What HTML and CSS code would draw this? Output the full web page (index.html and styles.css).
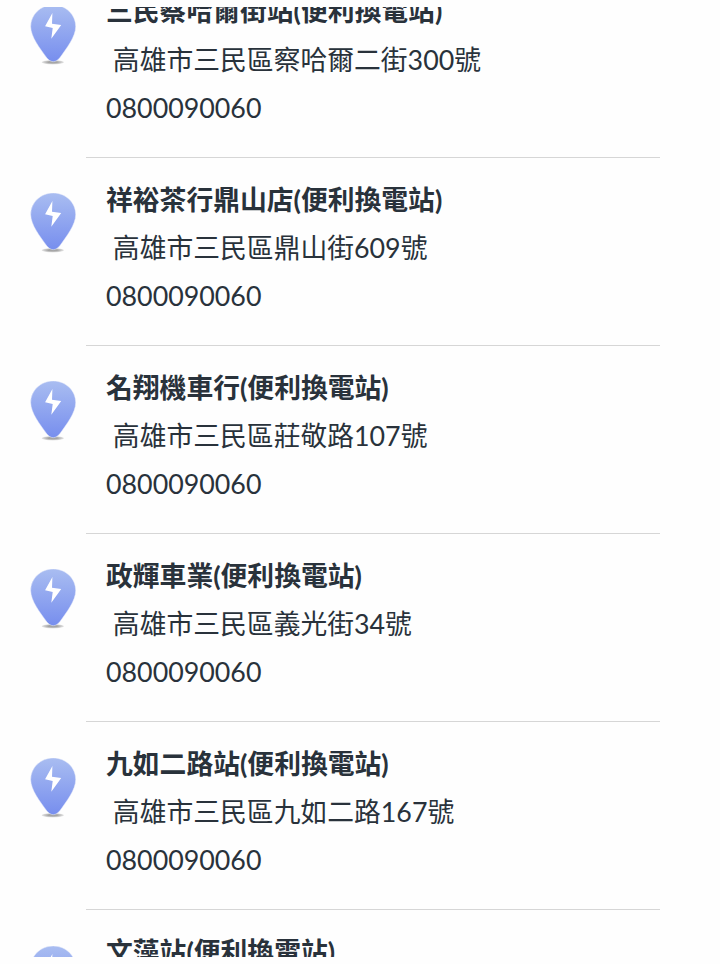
FILE: index.html
```html
<!DOCTYPE html>
<html lang="zh-Hant">
<head>
<meta charset="utf-8">
<title>換電站</title>
<link rel="stylesheet" href="styles.css">
</head>
<body>
<svg class="defs" width="0" height="0" aria-hidden="true">
  <defs>
    <linearGradient id="pin-fill" x1="0" y1="0" x2="0" y2="1">
      <stop offset="0" stop-color="#a9bdf1"/>
      <stop offset="1" stop-color="#778eee"/>
    </linearGradient>
    <radialGradient id="pin-shadow">
      <stop offset="0.4" stop-color="#a5a5a5"/>
      <stop offset="1" stop-color="#e6e6e6"/>
    </radialGradient>
    <symbol id="pin" viewBox="0 0 46 60">
      <ellipse cx="22.800" cy="57.200" rx="11.200" ry="2.200" fill="url(#pin-shadow)"/>
      <path d="M23.200 0C10.500 0 .7 9.600 .7 21.500C.7 32 10.500 44 16.500 52.500C20.500 58 26 58 30 52.500C36 44 45.700 32 45.700 21.500C45.700 9.600 35.900 0 23.200 0Z" fill="url(#pin-fill)" stroke="#e9edfb" stroke-width=".5"/>
      <path d="M22.400 7.900L15.100 21.300L22.700 22.900L21.300 33.700L31.200 19.900L22 18.700Z" fill="#fff"/>
    </symbol>
  </defs>
</svg>
<main class="viewport">
  <ul class="stations">
    <li class="station"><svg class="pin"><use href="#pin"/></svg><div class="info"><h2 class="name">三民察哈爾街站(便利換電站)</h2><p class="address"> 高雄市三民區察哈爾二街300號</p><p class="phone">0800090060</p></div></li>
    <li class="station"><svg class="pin"><use href="#pin"/></svg><div class="info"><h2 class="name">祥裕茶行鼎山店(便利換電站)</h2><p class="address"> 高雄市三民區鼎山街609號</p><p class="phone">0800090060</p></div></li>
    <li class="station"><svg class="pin"><use href="#pin"/></svg><div class="info"><h2 class="name">名翔機車行(便利換電站)</h2><p class="address"> 高雄市三民區莊敬路107號</p><p class="phone">0800090060</p></div></li>
    <li class="station"><svg class="pin"><use href="#pin"/></svg><div class="info"><h2 class="name">政輝車業(便利換電站)</h2><p class="address"> 高雄市三民區義光街34號</p><p class="phone">0800090060</p></div></li>
    <li class="station"><svg class="pin"><use href="#pin"/></svg><div class="info"><h2 class="name">九如二路站(便利換電站)</h2><p class="address"> 高雄市三民區九如二路167號</p><p class="phone">0800090060</p></div></li>
    <li class="station"><svg class="pin"><use href="#pin"/></svg><div class="info"><h2 class="name">文藻站(便利換電站)</h2></div></li>
  </ul>
</main>
</body>
</html>
```
FILE: styles.css
```css
* { box-sizing: border-box; }

body {
  margin: 0;
  padding-top: 7px;
  height: 964px;
  overflow: hidden;
  background: #fefefe;
  color: #29323b;
  font-family: Lato, "Noto Sans CJK TC", sans-serif;
  font-size: 26.8px;
  line-height: 48.2px;
}

.defs { position: absolute; }

.viewport {
  height: 950px;
  overflow: hidden;
}

/* The list is scrolled part of the way through its first station. */
.stations {
  list-style: none;
  margin: -37.7px 0 0;
  padding: 0;
}

.station {
  display: flex;
  height: 188.2px;
  padding-left: 30px;
}

.pin {
  flex: none;
  width: 46px;
  height: 60px;
  margin: 35.5px 10px 0 0;
}

.info {
  width: 574px;
  padding: 18px 0 0 20px;
  border-bottom: 1px solid #d6d6d6;
}

.name,
.address,
.phone {
  margin: 0;
  font-size: inherit;
  font-weight: 400;
  white-space: pre;
}

.name { font-weight: 700; }
```
